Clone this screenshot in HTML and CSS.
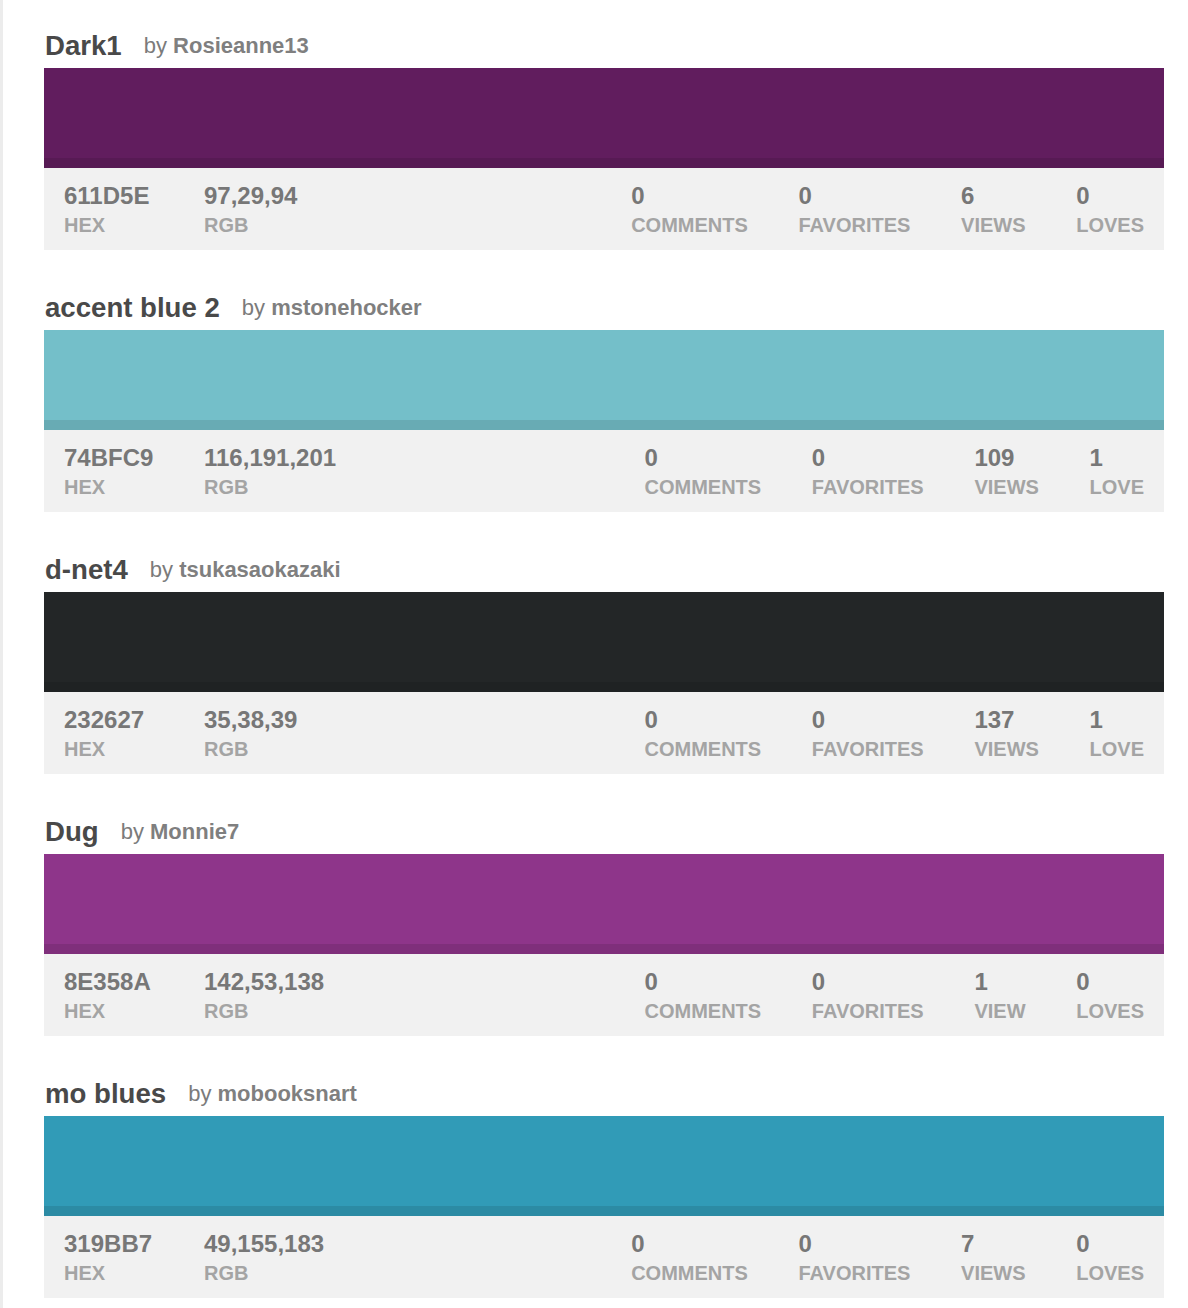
FILE: index.html
```html
<!DOCTYPE html>
<html>
<head>
<meta charset="utf-8">
<link rel="stylesheet" href="styles.css">
</head>
<body>
<div class="page">
  <div class="card">
    <div class="head"><span class="title">Dark1</span><span class="by">by <b>Rosieanne13</b></span></div>
    <div class="swatch" style="background:#611D5E"></div>
    <div class="info">
      <div class="left">
        <div class="stat hex"><div class="num">611D5E</div><div class="lbl">HEX</div></div>
        <div class="stat"><div class="num">97,29,94</div><div class="lbl">RGB</div></div>
      </div>
      <div class="right">
        <div class="stat"><div class="num">0</div><div class="lbl">COMMENTS</div></div>
        <div class="stat"><div class="num">0</div><div class="lbl">FAVORITES</div></div>
        <div class="stat"><div class="num">6</div><div class="lbl">VIEWS</div></div>
        <div class="stat"><div class="num">0</div><div class="lbl">LOVES</div></div>
      </div>
    </div>
  </div>

  <div class="card">
    <div class="head"><span class="title">accent blue 2</span><span class="by">by <b>mstonehocker</b></span></div>
    <div class="swatch" style="background:#74BFC9"></div>
    <div class="info">
      <div class="left">
        <div class="stat hex"><div class="num">74BFC9</div><div class="lbl">HEX</div></div>
        <div class="stat"><div class="num">116,191,201</div><div class="lbl">RGB</div></div>
      </div>
      <div class="right">
        <div class="stat"><div class="num">0</div><div class="lbl">COMMENTS</div></div>
        <div class="stat"><div class="num">0</div><div class="lbl">FAVORITES</div></div>
        <div class="stat"><div class="num">109</div><div class="lbl">VIEWS</div></div>
        <div class="stat"><div class="num">1</div><div class="lbl">LOVE</div></div>
      </div>
    </div>
  </div>

  <div class="card">
    <div class="head"><span class="title">d-net4</span><span class="by">by <b>tsukasaokazaki</b></span></div>
    <div class="swatch" style="background:#232627"></div>
    <div class="info">
      <div class="left">
        <div class="stat hex"><div class="num">232627</div><div class="lbl">HEX</div></div>
        <div class="stat"><div class="num">35,38,39</div><div class="lbl">RGB</div></div>
      </div>
      <div class="right">
        <div class="stat"><div class="num">0</div><div class="lbl">COMMENTS</div></div>
        <div class="stat"><div class="num">0</div><div class="lbl">FAVORITES</div></div>
        <div class="stat"><div class="num">137</div><div class="lbl">VIEWS</div></div>
        <div class="stat"><div class="num">1</div><div class="lbl">LOVE</div></div>
      </div>
    </div>
  </div>

  <div class="card">
    <div class="head"><span class="title">Dug</span><span class="by">by <b>Monnie7</b></span></div>
    <div class="swatch" style="background:#8E358A"></div>
    <div class="info">
      <div class="left">
        <div class="stat hex"><div class="num">8E358A</div><div class="lbl">HEX</div></div>
        <div class="stat"><div class="num">142,53,138</div><div class="lbl">RGB</div></div>
      </div>
      <div class="right">
        <div class="stat"><div class="num">0</div><div class="lbl">COMMENTS</div></div>
        <div class="stat"><div class="num">0</div><div class="lbl">FAVORITES</div></div>
        <div class="stat"><div class="num">1</div><div class="lbl">VIEW</div></div>
        <div class="stat"><div class="num">0</div><div class="lbl">LOVES</div></div>
      </div>
    </div>
  </div>

  <div class="card">
    <div class="head"><span class="title">mo blues</span><span class="by">by <b>mobooksnart</b></span></div>
    <div class="swatch" style="background:#319BB7"></div>
    <div class="info">
      <div class="left">
        <div class="stat hex"><div class="num">319BB7</div><div class="lbl">HEX</div></div>
        <div class="stat"><div class="num">49,155,183</div><div class="lbl">RGB</div></div>
      </div>
      <div class="right">
        <div class="stat"><div class="num">0</div><div class="lbl">COMMENTS</div></div>
        <div class="stat"><div class="num">0</div><div class="lbl">FAVORITES</div></div>
        <div class="stat"><div class="num">7</div><div class="lbl">VIEWS</div></div>
        <div class="stat"><div class="num">0</div><div class="lbl">LOVES</div></div>
      </div>
    </div>
  </div>
</div>
</body>
</html>
```

FILE: styles.css
```css
html, body {
  margin: 0;
  padding: 0;
  background: #ffffff;
}
body {
  font-family: "Liberation Sans", Arial, Helvetica, sans-serif;
}
.page {
  border-left: 3px solid #ececec;
  min-height: 1308px;
  box-sizing: border-box;
  padding: 30px 24px 0 41px;
}
.card {
  margin-bottom: 42px;
}
.head {
  display: flex;
  align-items: baseline;
  height: 32px;
  margin-bottom: 6px;
}
.title {
  font-size: 27.6px;
  line-height: 32px;
  font-weight: bold;
  color: #494949;
  margin-left: 1px;
}
.by {
  font-size: 22px;
  line-height: 32px;
  color: #7b7b7b;
  margin-left: 22px;
  position: relative;
  top: -2px;
}
.by b {
  font-weight: bold;
  color: #7f7f7f;
}
.swatch {
  height: 100px;
  box-shadow: inset 0 -10px 0 rgba(0, 0, 0, 0.1);
}
.info {
  background: #f1f1f1;
  height: 82px;
  box-sizing: border-box;
  padding: 14px 20px;
  display: flex;
  justify-content: space-between;
}
.left {
  display: flex;
  gap: 50px;
}
.right {
  display: flex;
  gap: 50.7px;
}
.left .hex {
  width: 90px;
}
.num {
  font-size: 24px;
  line-height: 28px;
  font-weight: bold;
  color: #777777;
}
.lbl {
  font-size: 20px;
  line-height: 22px;
  margin-top: 4px;
  font-weight: bold;
  color: #a4a4a4;
}
```
